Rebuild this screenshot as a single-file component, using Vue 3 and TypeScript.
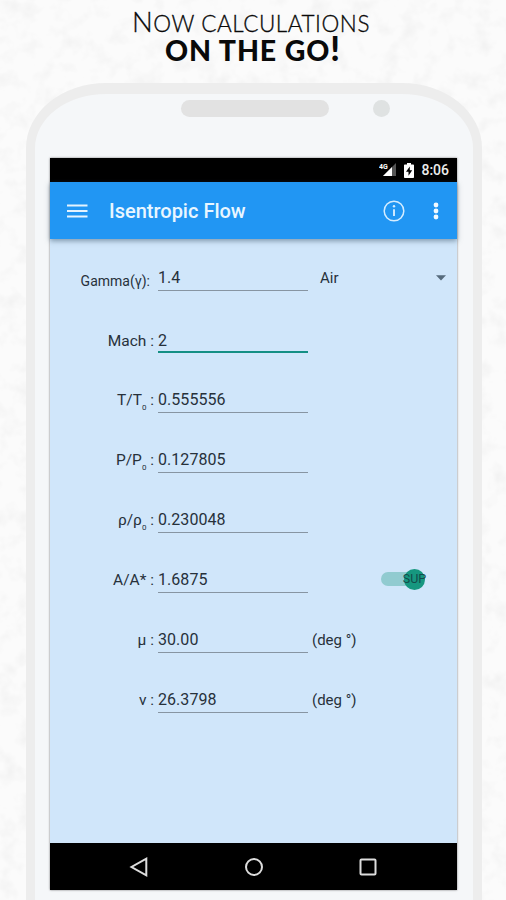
<script setup lang="ts">
interface Row {
  label: string
  sub?: string
  value: string
  unit?: string
  kind?: 'gamma' | 'active' | 'switch'
}

const rows: Row[] = [
  { label: 'Gamma(γ):', value: '1.4', kind: 'gamma' },
  { label: 'Mach :', value: '2', kind: 'active' },
  { label: 'T/T', sub: '0', value: '0.555556' },
  { label: 'P/P', sub: '0', value: '0.127805' },
  { label: 'ρ/ρ', sub: '0', value: '0.230048' },
  { label: 'A/A* :', value: '1.6875', kind: 'switch' },
  { label: 'μ :', value: '30.00', unit: '(deg °)' },
  { label: 'ν :', value: '26.3798', unit: '(deg °)' },
]
</script>

<template>
  <main class="page">
    <svg class="texture" width="506" height="900" aria-hidden="true">
      <filter id="paper" x="0" y="0" width="100%" height="100%">
        <feTurbulence type="fractalNoise" baseFrequency="0.055" numOctaves="3" seed="8" />
        <feColorMatrix values="0 0 0 0 .86  0 0 0 0 .86  0 0 0 0 .86  1.6 0 0 0 -.74" />
      </filter>
      <rect width="506" height="900" filter="url(#paper)" />
    </svg>

    <header class="headline">
      <div class="line-one"><span class="cap">N</span>OW CALCULATIONS</div>
      <div class="line-two">ON THE GO<span class="bang">!</span></div>
    </header>

    <section class="phone">
      <div class="hardware">
        <span class="speaker"></span>
        <span class="camera"></span>
      </div>

      <div class="screen">
        <div class="status">
          <svg class="signal" width="19" height="16" viewBox="0 0 19 16">
            <path d="M17 1v13H4z" fill="#555" />
            <path d="M13 5v9H4z" fill="#fff" />
            <text x="0" y="6.5" class="net">4G</text>
          </svg>
          <svg class="battery" width="10" height="15" viewBox="0 0 10 15">
            <path d="M3 0h4v1.500h2.200q.8 0 .8.8v11.900q0 .8-.8.8H.8q-.8 0-.8-.8V2.300q0-.8.8-.8H3z" fill="#fff" />
            <path d="M5.800 3.500 2 8.800h2.500v4L8.200 7.300H5.800z" fill="#000" />
          </svg>
          <span class="clock">8:06</span>
        </div>

        <div class="appbar">
          <svg class="menu" width="21" height="14" viewBox="0 0 21 14">
            <path d="M0 1.500h20.500M0 7h20.500M0 12.500h20.500" stroke="#e4f3fe" stroke-width="1.900" />
          </svg>
          <h1>Isentropic Flow</h1>
          <svg class="info" width="22" height="22" viewBox="0 0 22 22">
            <circle cx="11" cy="11" r="9.800" fill="none" stroke="#d5edff" stroke-width="1.500" />
            <path d="M11 9.200v6.800" stroke="#d5edff" stroke-width="1.900" />
            <circle cx="11" cy="6.300" r="1.200" fill="#d5edff" />
          </svg>
          <svg class="more" width="6" height="18" viewBox="0 0 6 18">
            <circle cx="3" cy="3" r="2.400" fill="#f2faff" />
            <circle cx="3" cy="9" r="2.400" fill="#f2faff" />
            <circle cx="3" cy="15" r="2.400" fill="#f2faff" />
          </svg>
        </div>

        <div class="form">
          <div v-for="row in rows" :key="row.label" class="row" :class="row.kind">
            <div class="label">{{ row.label }}<template v-if="row.sub"><span class="sub">{{ row.sub }}</span> :</template></div>
            <div class="field">{{ row.value }}</div>
            <div v-if="row.kind === 'gamma'" class="select">
              <span>Air</span>
              <svg width="10" height="6" viewBox="0 0 10 6"><path d="M0 .3h10L5 5.500z" fill="#566b7c" /></svg>
            </div>
            <div v-else-if="row.kind === 'switch'" class="toggle">
              <span class="thumb">SUP</span>
            </div>
            <div v-else-if="row.unit" class="unit">{{ row.unit }}</div>
          </div>
        </div>

        <nav class="nav">
          <svg width="20" height="20" viewBox="0 0 20 20"><path d="M17.300 1.700v16.600L2.500 10z" /></svg>
          <svg width="20" height="20" viewBox="0 0 20 20"><circle cx="10" cy="10" r="8" /></svg>
          <svg width="20" height="20" viewBox="0 0 20 20"><rect x="2.500" y="2.500" width="15" height="15" rx="1" /></svg>
        </nav>
      </div>
    </section>
  </main>
</template>

<style>
body {
  margin: 0;
  overflow: hidden;
}
</style>

<style scoped>
.page {
  position: relative;
  width: 506px;
  height: 900px;
  overflow: hidden;
  background: #fbfbfb;
  font-family: Roboto, "Liberation Sans", sans-serif;
}
.texture {
  position: absolute;
  inset: 0;
}
.headline {
  position: relative;
  box-sizing: border-box;
  height: 83px;
  padding-top: 8px;
  color: #090909;
  font-family: Lato, sans-serif;
  text-align: center;
  white-space: nowrap;
}
.line-one {
  height: 28px;
  margin-right: 4px;
  line-height: 28px;
  font-size: 22.500px;
  font-weight: 300;
  letter-spacing: 0.550px;
  -webkit-text-stroke: 0.300px #090909;
}
.cap {
  font-size: 27.500px;
}
.line-two {
  height: 28px;
  line-height: 28px;
  font-size: 28.500px;
  font-weight: 900;
  letter-spacing: 0.900px;
}
.bang {
  font-size: 34px;
  line-height: 0;
}
.phone {
  position: relative;
  box-sizing: border-box;
  width: 456px;
  height: 880px;
  margin-left: 26px;
  padding: 0 15px;
  border: 9px solid #ededed;
  border-top-width: 11px;
  border-radius: 80px 80px 0 0 / 65px 65px 0 0;
  background: #f5f7f9;
}
.hardware {
  display: flex;
  align-items: center;
  height: 64px;
  padding: 0 0 0 131px;
  box-sizing: border-box;
}
.speaker {
  width: 148px;
  height: 17px;
  margin-top: -35px;
  border-radius: 9px;
  background: #e2e2e2;
}
.camera {
  width: 17px;
  height: 17px;
  margin: -35px 0 0 44px;
  border-radius: 50%;
  background: #dfe2e2;
}
.screen {
  width: 407px;
  height: 732px;
  box-shadow: 0 0 2px #777;
  background: #d0e6fa;
}
.status {
  display: flex;
  align-items: center;
  justify-content: flex-end;
  height: 24px;
  padding-right: 8px;
  background: #000;
}
.signal {
  margin-right: 6px;
}
.net {
  font: 700 7px Roboto, sans-serif;
  fill: #fff;
}
.battery {
  margin-right: 7px;
}
.clock {
  color: #ececec;
  font-size: 14px;
  font-weight: 500;
}
.appbar {
  position: relative;
  display: flex;
  align-items: center;
  box-sizing: border-box;
  height: 57px;
  padding: 0 18px 0 17px;
  background: #2196f3;
  box-shadow: 0 2px 5px rgba(50, 75, 95, 0.500);
}
h1 {
  flex: 1;
  margin: 1px 0 0 21px;
  color: #e9f6ff;
  font-size: 20px;
  font-weight: 500;
  line-height: 24px;
}
.more {
  margin-left: 28px;
}
.form {
  height: 604px;
  color: #27313a;
  font-size: 16px;
}
.row {
  display: grid;
  grid-template-columns: 104px 150px 1fr;
  column-gap: 4px;
  align-items: end;
  height: 60px;
  line-height: 20px;
}
.row.gamma {
  height: 52px;
}
.row.active {
  height: 62px;
}
.label {
  padding-bottom: 3px;
  font-size: 15.500px;
  text-align: right;
  white-space: nowrap;
}
.gamma .label {
  padding: 0 4px 0 0;
  font-size: 14px;
}
.active .label {
  padding-bottom: 2px;
}
.sub {
  position: relative;
  top: 5px;
  font-size: 8px;
  line-height: 0;
}
.field {
  padding-bottom: 2px;
  border-bottom: 1px solid #8795a2;
  letter-spacing: 0.050px;
}
.active .field {
  padding-bottom: 0;
  border-bottom: 2px solid #148f84;
}
.unit {
  padding-bottom: 3px;
  font-size: 15px;
}
.select {
  display: flex;
  align-items: center;
  justify-content: space-between;
  padding: 0 11px 3px 8px;
  font-size: 15px;
}
.toggle {
  display: flex;
  align-items: center;
  justify-content: flex-end;
  width: 44px;
  height: 14px;
  margin: 0 0 7px 69px;
  border-radius: 7px;
  background: #91cbd0;
}
.thumb {
  display: flex;
  align-items: center;
  justify-content: center;
  width: 21px;
  height: 21px;
  border-radius: 50%;
  background: #16977f;
  color: #124c4b;
  font-size: 12.500px;
  white-space: nowrap;
}
.nav {
  display: flex;
  align-items: center;
  justify-content: space-between;
  height: 47px;
  padding: 0 79px;
  background: #000;
}
.nav svg {
  fill: none;
  stroke: #ddd;
  stroke-width: 2;
}
</style>
